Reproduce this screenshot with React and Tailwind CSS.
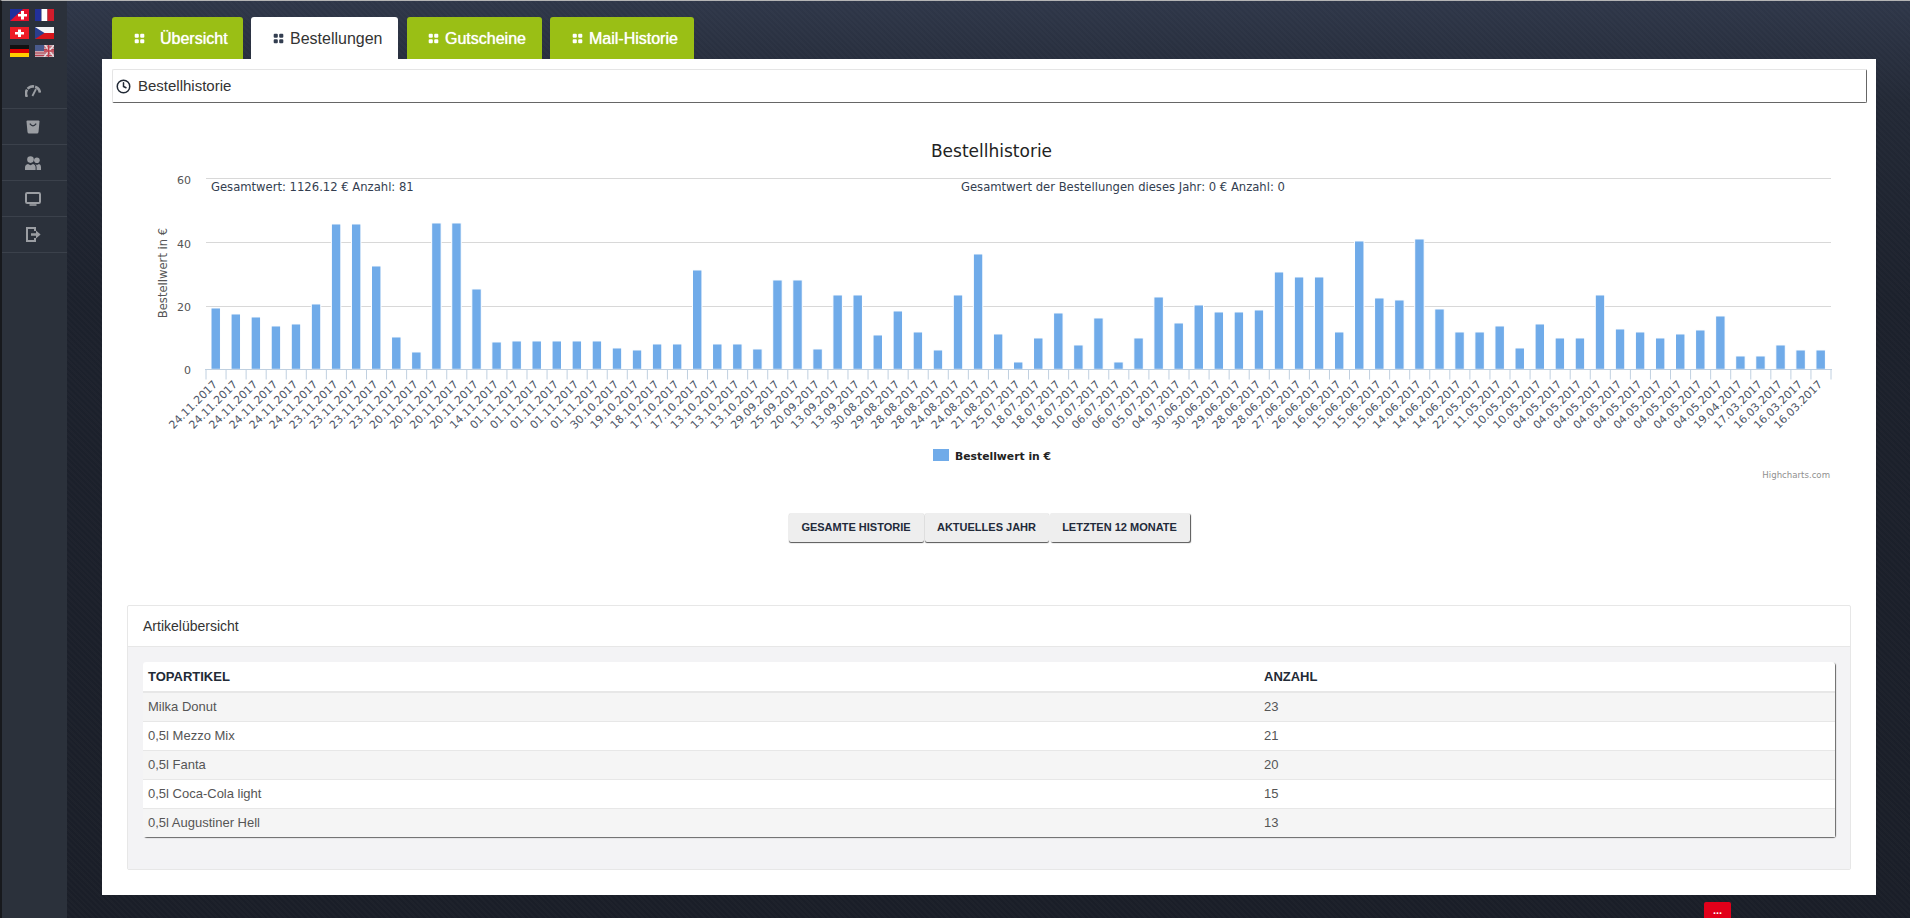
import { BsGridFill } from "react-icons/bs";
import { FiClock } from "react-icons/fi";

const dates = [
  ...Array(6).fill("24.11.2017"), ...Array(4).fill("23.11.2017"), ...Array(4).fill("20.11.2017"), "14.11.2017",
  ...Array(5).fill("01.11.2017"), "30.10.2017", "19.10.2017", "18.10.2017", "17.10.2017", "17.10.2017",
  "13.10.2017", "13.10.2017", "13.10.2017", "29.09.2017", "25.09.2017", "20.09.2017", "13.09.2017", "13.09.2017",
  "30.08.2017", "29.08.2017", "28.08.2017", "28.08.2017", "24.08.2017", "24.08.2017", "21.08.2017", "25.07.2017",
  "18.07.2017", "18.07.2017", "18.07.2017", "10.07.2017", "06.07.2017", "06.07.2017", "05.07.2017", "04.07.2017",
  "30.06.2017", "30.06.2017", "29.06.2017", "28.06.2017", "28.06.2017", "27.06.2017", "26.06.2017", "16.06.2017",
  "15.06.2017", "15.06.2017", "15.06.2017", "14.06.2017", "14.06.2017", "14.06.2017", "22.05.2017", "11.05.2017",
  "10.05.2017", "10.05.2017", ...Array(9).fill("04.05.2017"), "19.04.2017", "17.03.2017", "16.03.2017", "16.03.2017", "16.03.2017",
];

// top edge of each bar, measured in a 3x crop (baseline at 748)
const tops = [
  564, 582, 591, 618, 612, 552, 312, 312, 438, 651, 696, 309, 309, 507, 666, 663, 663, 663, 663, 663, 684, 690, 672, 672, 450,
  672, 672, 687, 480, 480, 687, 525, 525, 645, 573, 636, 690, 525, 402, 642, 726, 654, 579, 675, 594, 726, 654, 531, 609, 555,
  576, 576, 570, 456, 471, 471, 636, 363, 534, 540, 357, 567, 636, 636, 618, 684, 612, 654, 654, 525, 627, 636, 654, 642, 630,
  588, 708, 708, 675, 690, 690,
];

const rows = [
  ["Milka Donut", 23],
  ["0,5l Mezzo Mix", 21],
  ["0,5l Fanta", 20],
  ["0,5l Coca-Cola light", 15],
  ["0,5l Augustiner Hell", 13],
];

const tabs = [
  { label: "Übersicht", className: "w-[131px] pl-[22px] gap-[15px]" },
  { label: "Bestellungen", active: true, className: "w-[147px] pl-[22px] gap-[6px] mr-px" },
  { label: "Gutscheine", className: "w-[135px] pl-[21px] gap-[6px]" },
  { label: "Mail-Historie", className: "w-[144px] pl-[22px] gap-[6px]" },
];

const AXIS_X = 206;
const AXIS_Y = 369.3;
const STEP = 1625 / 81;

function Flag({ children }) {
  return (
    <svg width="19" height="12" viewBox="0 0 19 12" className="block">
      {children}
    </svg>
  );
}

function Flags() {
  return (
    <div className="grid grid-cols-[19px_19px] gap-x-[6px] gap-y-[6px] pl-[8px] pt-[8px] h-[72px] content-start">
      <Flag>
        <rect width="19" height="12" fill="#e8112d" />
        <path d="M0 0H13L0 12Z" fill="#1f2f9c" />
        <path d="M8 5h3V2h3v3h3v2.4h-3v3h-3v-3H8Z" fill="#fff" />
      </Flag>
      <Flag>
        <rect width="6.5" height="12" fill="#22309a" />
        <rect x="6.5" width="6" height="12" fill="#fff" />
        <rect x="12.5" width="6.5" height="12" fill="#d21c2c" />
      </Flag>
      <Flag>
        <rect width="19" height="12" fill="#ee1c25" />
        <path d="M8 2.5h3V5h3v2.4h-3V10H8V7.4H5V5h3Z" fill="#fff" />
      </Flag>
      <Flag>
        <rect width="19" height="6" fill="#f4f4f6" />
        <rect y="6" width="19" height="6" fill="#d7141a" />
        <path d="M0 0L9.5 6L0 12Z" fill="#2a3f8f" />
      </Flag>
      <Flag>
        <rect width="19" height="4" fill="#111" />
        <rect y="4" width="19" height="4" fill="#dd0000" />
        <rect y="8" width="19" height="4" fill="#ffce00" />
      </Flag>
      <Flag>
        <rect width="19" height="12" fill="#c9a6ae" />
        <rect width="9" height="6" fill="#4a5a8c" />
        <path d="M0 8h19M0 10.5h19M9 2h10M9 4.5h10" stroke="#b5404f" strokeWidth="1" />
        <path d="M9 12L19 0M10 0l9 12" stroke="#e8dfe2" strokeWidth="1.5" />
        <path d="M13.5 0v12M9 6h10" stroke="#c23a48" strokeWidth="1.4" />
      </Flag>
    </div>
  );
}

function Gauge() {
  return (
    <svg width="16" height="12" viewBox="0 0 16 12" fill="none" stroke="currentColor">
      <path d="M2 12A7 7 0 1 1 14 12" strokeWidth="2.6" strokeDasharray="7.5 1 7 1 8" />
      <path d="M7.4 11L11 4" strokeWidth="1.8" />
    </svg>
  );
}

function Basket() {
  return (
    <svg width="14" height="14" viewBox="0 0 14 14">
      <path d="M0.5 1.5Q0.5 0.5 1.5 0.5H12.5Q13.5 0.5 13.5 1.5L12.5 12Q12.3 13.5 11 13.5H3Q1.7 13.5 1.5 12Z" fill="currentColor" />
      <path d="M3.8 3.6Q7 8 10.2 3.6" fill="none" stroke="#2b313b" strokeWidth="1.3" />
    </svg>
  );
}

function Users() {
  return (
    <svg width="16" height="14" viewBox="0 0 16 14" fill="currentColor">
      <circle cx="5.5" cy="3.6" r="3.3" />
      <path d="M0 14V11.5Q0 8.6 3 8L5.5 9.2L8 8Q10.6 8.6 10.6 11.5V14Z" />
      <circle cx="11.9" cy="4.2" r="2.8" />
      <path d="M11.6 14V11.2Q11.6 9.2 10.2 8.2L12 9L14 8Q16 8.6 16 11V14Z" />
    </svg>
  );
}

function Monitor() {
  return (
    <svg width="16" height="14" viewBox="0 0 16 14" fill="none" stroke="currentColor">
      <rect x="1" y="1" width="14" height="10" rx="1.2" strokeWidth="2" />
      <path d="M4.5 13h7" strokeWidth="1.6" />
    </svg>
  );
}

function SignOut() {
  return (
    <svg width="15" height="15" viewBox="0 0 15 15" fill="none" stroke="currentColor">
      <path d="M9 4V1H1V14H9V11" strokeWidth="2" />
      <path d="M5 6.2H10V3.6L14.6 7.5L10 11.4V8.8H5Z" fill="currentColor" stroke="none" />
    </svg>
  );
}

function Sidebar() {
  const items = [<Gauge />, <Basket />, <Users />, <Monitor />, <SignOut />];
  return (
    <div className="w-[65px] shrink-0 bg-[#2b313b]">
      <Flags />
      {items.map((icon, i) => (
        <div key={i} className="h-[36px] border-b border-[#3b414b] flex items-center justify-center pr-[3px] text-[#9b9ea3]">
          {icon}
        </div>
      ))}
    </div>
  );
}

function Chart() {
  const text = "fill-[#333e50] text-[11.6px]";
  return (
    <svg width="1755" height="400" viewBox="112 103 1755 400" className="block font-['DejaVu_Sans',sans-serif]">
      <text x="991.5" y="156.5" textAnchor="middle" className="fill-[#222] text-[17px]">
        Bestellhistorie
      </text>
      {[178.5, 242.5, 306.5].map((y) => (
        <line key={y} x1={AXIS_X} x2="1831" y1={y} y2={y} stroke="#d8d8d8" />
      ))}
      {[["60", 184], ["40", 247.5], ["20", 311], ["0", 374]].map(([label, y]) => (
        <text key={label} x="191" y={y} textAnchor="end" className="fill-[#555] text-[11px]">
          {label}
        </text>
      ))}
      <text transform="rotate(-90 167 273)" x="167" y="273" textAnchor="middle" className="fill-[#555] text-[11.6px]">
        Bestellwert in €
      </text>
      {tops.map((top, i) => {
        const h = (748 - top) / 3;
        return (
          <rect
            key={i}
            x={AXIS_X + STEP * i + 5}
            y={AXIS_Y - h}
            width={STEP - 10.6}
            height={h}
            fill="#70abe9"
            stroke="#fff"
          />
        );
      })}
      <line x1={AXIS_X - 1} x2="1832" y1="369.5" y2="369.5" stroke="#c0d0e0" />
      {Array.from({ length: 82 }, (_, i) => (
        <line key={i} x1={AXIS_X + STEP * i} x2={AXIS_X + STEP * i} y1="369.5" y2="379.5" stroke="#c0d0e0" />
      ))}
      {dates.map((d, i) => {
        const x = AXIS_X + STEP * i + 12;
        return (
          <text key={i} x={x} y="385" textAnchor="end" transform={`rotate(-45 ${x} 385)`} className="fill-[#4d5566] text-[11px]">
            {d}
          </text>
        );
      })}
      <text x="211" y="191" className={text}>
        Gesamtwert: 1126.12 € Anzahl: 81
      </text>
      <text x="961" y="191" className={text}>
        Gesamtwert der Bestellungen dieses Jahr: 0 € Anzahl: 0
      </text>
      <rect x="933" y="449" width="16" height="12" fill="#70abe9" />
      <text x="955" y="459.5" className="fill-[#222] text-[10.8px] font-bold">
        Bestellwert in €
      </text>
      <text x="1830" y="478" textAnchor="end" className="fill-[#909090] text-[8.6px]">
        Highcharts.com
      </text>
    </svg>
  );
}

function ChartButton({ children, className }) {
  return (
    <button className={`h-[29px] bg-[#eeeeee] rounded-[2px] text-[11px] font-bold text-[#222a3a] uppercase ${className}`}>
      {children}
    </button>
  );
}

function TopArticles() {
  return (
    <div className="ml-[15px] w-[1724px] border border-[#e7e7e7] rounded-[2px]">
      <div className="h-[41px] border-b border-[#e7e7e7] flex items-center pl-[15px] text-[14px] text-[#333]">Artikelübersicht</div>
      <div className="bg-[#f3f3f5] pt-[15px] pl-[15px] pr-[15px] pb-[32px]">
        <table className="w-full border-collapse bg-white rounded-[3px] shadow-[1px_1px_1px_#666] text-[13px] table-fixed">
          <thead>
            <tr className="h-[30px] border-b-2 border-[#e7e7e7] text-left text-[#222a36]">
              <th className="pl-[5px] w-[1116px] font-bold">TOPARTIKEL</th>
              <th className="pl-[5px] font-bold">ANZAHL</th>
            </tr>
          </thead>
          <tbody>
            {rows.map(([name, count], i) => (
              <tr key={name} className={`h-[29px] border-b border-[#e7e7e7] last:border-b-0 text-[#555] ${i % 2 === 0 ? "bg-[#f5f5f5]" : "bg-white"}`}>
                <td className="pl-[5px]">{name}</td>
                <td className="pl-[5px]">{count}</td>
              </tr>
            ))}
          </tbody>
        </table>
      </div>
    </div>
  );
}

export default function App() {
  return (
    <div className="relative h-[918px] w-full overflow-hidden flex border-t border-[#b5b5b5] border-l-2 border-l-[#17191d] bg-[#1b1f2a] bg-[repeating-linear-gradient(45deg,rgba(255,255,255,0.015)_0_2px,transparent_2px_4px),linear-gradient(180deg,#2f3749_0px,#232936_100px,#1c212c_300px,#1a1e28_100%)] font-['Liberation_Sans',Arial,sans-serif]">
      <Sidebar />
      <div className="ml-[35px] w-[1774px] pt-[16px]">
        <div className="flex gap-[8px] pl-[10px] h-[43px] relative">
          {tabs.map((tab) => (
            <div
              key={tab.label}
              className={`h-[43px] rounded-t-[3px] flex items-center text-[16px] ${tab.className} ${
                tab.active ? "bg-white text-[#333]" : "bg-[#9abf15] text-white [text-shadow:0_0_1px_#fff]"
              }`}
            >
              <BsGridFill size={11} className={tab.active ? "text-[#333e50]" : "text-white"} />
              <span>{tab.label}</span>
            </div>
          ))}
        </div>
        <div className="bg-white h-[836px] -mt-px relative pt-[10px] px-[10px]">
          <div className="w-[1755px] h-[34px] border border-[#e5e5e5] border-b-[#666] border-r-[#666] rounded-[2px] flex items-center pl-[3px] gap-[7px] text-[15px] text-[#333]">
            <FiClock size={15} className="text-[#222a36]" strokeWidth={2.4} />
            <span>Bestellhistorie</span>
          </div>
          <Chart />
          <div className="flex justify-center mt-[10px] gap-px rounded-[2px]">
            <ChartButton className="w-[135px] shadow-[0_1px_1px_#555]">Gesamte Historie</ChartButton>
            <ChartButton className="w-[124px] shadow-[0_1px_1px_#555]">Aktuelles Jahr</ChartButton>
            <ChartButton className="w-[140px] shadow-[1px_1px_1px_#555]">Letzten 12 Monate</ChartButton>
          </div>
          <div className="h-[63px]" />
          <TopArticles />
        </div>
      </div>
      <div className="absolute left-[1702px] top-[901px] w-[27px] h-[17px] bg-[#e2001a] rounded-t-[2px] flex items-center justify-center text-white text-[11px] font-bold">
        ...
      </div>
    </div>
  );
}
